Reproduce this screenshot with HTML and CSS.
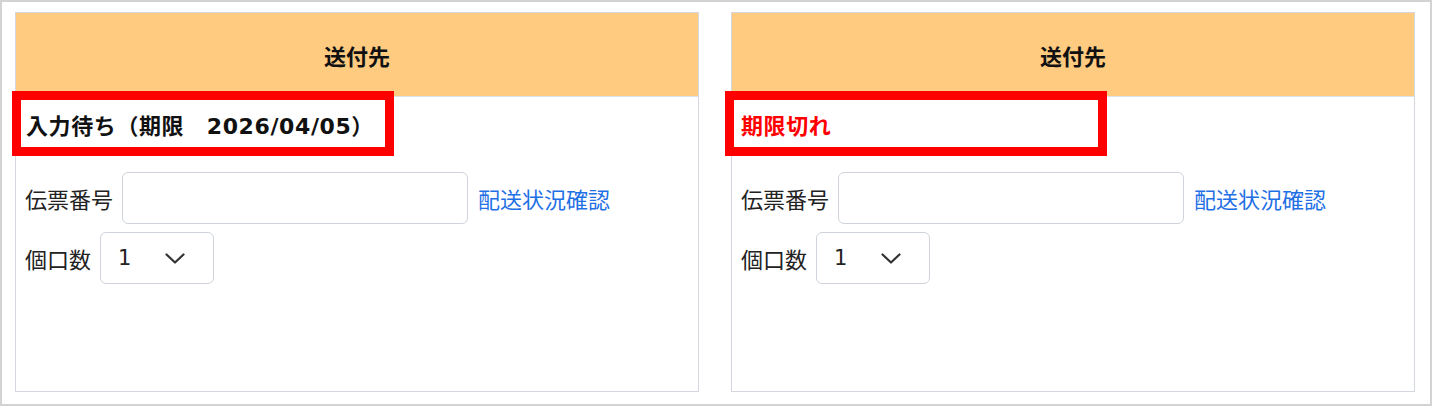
FILE: index.html
```html
<!DOCTYPE html>
<html lang="ja">
  <head>
    <meta charset="UTF-8" />
    <meta name="viewport" content="width=device-width, initial-scale=1.0" />
    <title>送付先</title>
    <link rel="stylesheet" href="styles.css">
  </head>
  <body>
    <div class="frame">
      <div class="panel">
        <div class="panel-head">送付先</div>
        <div class="panel-body">
          <div class="status">入力待ち（期限　2026/04/05）</div>
          <div class="row">
            <label class="label">伝票番号</label>
            <input class="slip" type="text" />
            <a class="link" href="#">配送状況確認</a>
          </div>
          <div class="row">
            <label class="label">個口数</label>
            <div class="select">
              <span>1</span>
              <svg width="20" height="11" viewBox="0 0 20 11"><polyline points="1.5,1.5 10,9.5 18.5,1.5" fill="none" stroke="#333" stroke-width="2.2" stroke-linecap="round" stroke-linejoin="round"/></svg>
            </div>
          </div>
        </div>
        <div class="mark"></div>
      </div>

      <div class="panel">
        <div class="panel-head">送付先</div>
        <div class="panel-body">
          <div class="status expired">期限切れ</div>
          <div class="row">
            <label class="label">伝票番号</label>
            <input class="slip" type="text" />
            <a class="link" href="#">配送状況確認</a>
          </div>
          <div class="row">
            <label class="label">個口数</label>
            <div class="select">
              <span>1</span>
              <svg width="20" height="11" viewBox="0 0 20 11"><polyline points="1.5,1.5 10,9.5 18.5,1.5" fill="none" stroke="#333" stroke-width="2.2" stroke-linecap="round" stroke-linejoin="round"/></svg>
            </div>
          </div>
        </div>
        <div class="mark mark-right"></div>
      </div>
    </div>
  </body>
</html>
```

FILE: styles.css
```css
* {
  box-sizing: border-box;
}

body {
  margin: 0;
  font-family: "DejaVu Sans", "Noto Sans CJK JP", sans-serif;
  font-size: 22px;
  color: #222;
  background: #fff;
}

.frame {
  width: 1432px;
  height: 406px;
  border: 2px solid #d3d3d3;
  padding: 10px 15px 0 13px;
  display: flex;
  gap: 32px;
}

.panel {
  position: relative;
  width: 684px;
  height: 380px;
  border: 1px solid #d4d8de;
}

.panel-head {
  height: 84px;
  background-color: #fecb80;
  border-bottom: 1px solid #dde3ea;
  display: flex;
  align-items: center;
  justify-content: center;
  font-weight: bold;
  color: #111;
}

.panel-body {
  padding: 14px 9px 0 9px;
}

.status {
  height: 32px;
  line-height: 32px;
  margin-bottom: 29px;
  font-weight: bold;
  color: #111;
  padding-left: 1px;
  letter-spacing: 0.6px;
}
.status.expired {
  color: #f00;
  padding-left: 0;
}

.row {
  display: flex;
  align-items: center;
  gap: 9px;
  margin-bottom: 8px;
}

.label {
  white-space: nowrap;
}

.slip {
  width: 346px;
  height: 52px;
  border: 1px solid #cfd4da;
  border-radius: 6px;
  background: #fff;
}

.link {
  margin-left: 1px;
  color: #1f6fe5;
  text-decoration: none;
}

.select {
  width: 114px;
  height: 52px;
  border: 1px solid #cfd4da;
  border-radius: 6px;
  display: flex;
  align-items: center;
  padding-left: 17px;
  gap: 34px;
  font-size: 21px;
}

.mark {
  position: absolute;
  left: -4px;
  top: 78px;
  width: 382px;
  height: 65px;
  border: 9px solid #f00;
}
.mark-right {
  left: -7px;
}
```
